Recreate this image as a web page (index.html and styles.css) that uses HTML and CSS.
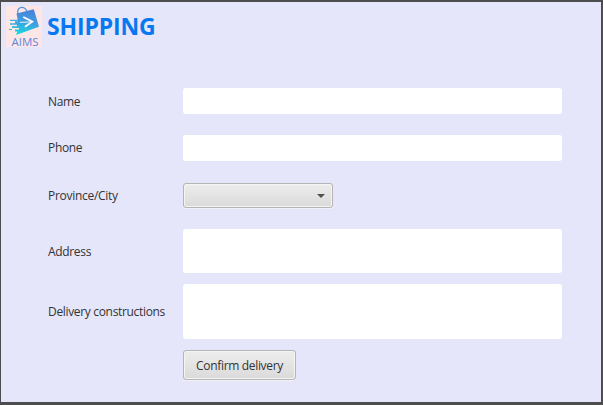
FILE: index.html
```html
<!DOCTYPE html>
<html lang="en">
<head>
<meta charset="utf-8">
<title>Shipping</title>
<link rel="stylesheet" href="styles.css">
</head>
<body>
<main class="window">
  <header class="header">
    <svg class="logo" width="36" height="41" viewBox="0 0 36 41" role="img" aria-label="AIMS">
      <defs>
        <linearGradient id="bag" x1="0.6" y1="0" x2="0.4" y2="1">
          <stop offset="0" stop-color="#4a80d8"/>
          <stop offset="0.5" stop-color="#3fa0e2"/>
          <stop offset="1" stop-color="#12dcdc"/>
        </linearGradient>
      </defs>
      <rect width="36" height="41" fill="#fee5e6"/>
      <path d="M11.800 8C11.200 4 12.500 1.800 15.500 1.400C18.500 1.100 20 3 21 5.500" fill="none" stroke="#4f94dc" stroke-width="1.300"/>
      <path d="M10.500 7.500L27.800 3.300L33 20.700L10 29L11.500 25.500H9V23.600H13V22H6V20.300H11V18.700H4V17.200H9V15.300H12Z" fill="url(#bag)"/>
      <path d="M4 14.400H12M3 23.500H6" stroke="#35b5e4" stroke-width="1.200"/>
      <path d="M17.300 11L26.300 15.700L19 20.800" fill="none" stroke="#fff" stroke-width="1.800"/>
      <path d="M14 16.300L24 16" fill="none" stroke="#e8f5ff" stroke-width="1"/>
      <text class="logo-text" x="5.500" y="39.800" textLength="27" lengthAdjust="spacingAndGlyphs">AIMS</text>
    </svg>
    <h1 class="title">SHIPPING</h1>
  </header>
  <form class="form">
    <label class="l-name" for="name">Name</label>
    <input class="field" id="name" type="text">
    <label class="l-phone" for="phone">Phone</label>
    <input class="field" id="phone" type="text">
    <label class="l-city" for="city">Province/City</label>
    <button class="combo" id="city" type="button" aria-label="Province/City"><span class="arrow"></span></button>
    <label class="l-address" for="address">Address</label>
    <textarea class="field" id="address"></textarea>
    <label class="l-delivery" for="delivery">Delivery constructions</label>
    <textarea class="field" id="delivery"></textarea>
    <button class="confirm" type="button">Confirm delivery</button>
  </form>
</main>
</body>
</html>
```

FILE: styles.css
```css
* { box-sizing: border-box; }
body { margin: 0; }
.window {
  height: 405px;
  border: solid #4d4d4f;
  border-width: 2px 2px 3px 1px;
  background: #e5e6fa;
  font: 12px/16px "Segoe UI", "Open Sans", "Noto Sans", sans-serif;
  color: #333;
  overflow: hidden;
}
.header {
  display: flex;
  padding: 4px 0 0 5px;
  height: 86px;
}
.logo { flex: none; overflow: visible; }
.logo-text { font: 11px "Open Sans", sans-serif; fill: #5b88dc; }
.title {
  margin: 4px 0 0 5px;
  font-size: 23px;
  line-height: 32px;
  font-weight: 700;
  letter-spacing: -0.150px;
  color: #0878f0;
}
.form {
  display: grid;
  grid-template-columns: 135px 379px;
  grid-template-rows: 26px 21px 26px 22px 25px 21px 44px 11px 55px 11px 30px;
  margin-left: 47px;
  align-items: center;
}
.form > label { grid-column: 1; letter-spacing: -0.330px; white-space: nowrap; }
.form > :not(label) { grid-column: 2; }
.l-name, #name { grid-row: 1; }
.l-phone, #phone { grid-row: 3; }
.l-city, #city { grid-row: 5; }
.form > .l-city { letter-spacing: -0.280px; }
.l-address, #address { grid-row: 7; }
.l-name, .l-address { padding-top: 2px; }
.l-delivery, #delivery { grid-row: 9; }
.field {
  width: 100%;
  height: 100%;
  margin: 0;
  padding: 4px 7px;
  border: 0;
  border-radius: 3px;
  background: #fff;
  font: inherit;
  resize: none;
}
.combo, .confirm {
  border: 1px solid #b5b5b5;
  border-radius: 3px;
  background: linear-gradient(#ededed, #dadada);
  box-shadow: inset 0 0 0 1px #f4f4f4, 0 1px 0 #f0f1fb;
  height: 100%;
  font: inherit;
  color: #333;
}
.combo {
  display: flex;
  align-items: center;
  justify-content: flex-end;
  width: 150px;
  padding: 0 7px;
}
.arrow {
  border: solid transparent;
  border-width: 4px 4px 0;
  border-top-color: #505050;
}
.confirm {
  grid-row: 11;
  width: 113px;
  padding: 2px 0 0;
  letter-spacing: -0.330px;
  white-space: nowrap;
}
```
